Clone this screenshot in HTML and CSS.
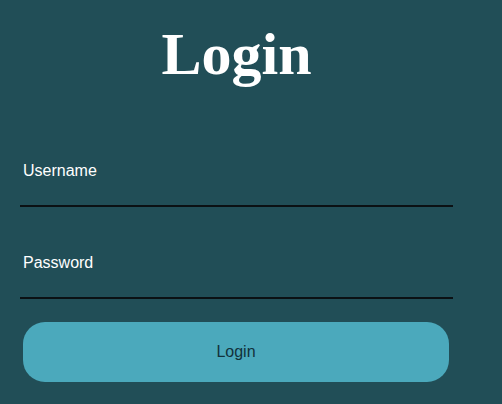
FILE: index.html
```html
<!DOCTYPE html>
<html>
<head>
<meta charset="utf-8">
<link rel="stylesheet" href="styles.css">
</head>
<body>
<form class="login">
  <h1 class="title">Login</h1>
  <div class="field"><span class="label">Username</span></div>
  <div class="field"><span class="label">Password</span></div>
  <button type="button" class="btn">Login</button>
</form>
</body>
</html>
```
FILE: styles.css
```css
html, body {
  margin: 0;
  padding: 0;
  background: #214e57;
  height: 100%;
}
body {
  font-family: "Liberation Sans", Arial, sans-serif;
}
.login {
  width: 433px;
  margin-left: 20px;
  display: flex;
  flex-direction: column;
}
.title {
  margin: 19px 0 0;
  font-family: "Liberation Serif", "Times New Roman", serif;
  font-weight: bold;
  font-size: 60px;
  line-height: 70px;
  height: 70px;
  color: #ffffff;
  text-align: center;
}
.field {
  padding: 47px 3px 25px;
  border-bottom: 2px solid #0b1114;
}
.field:first-of-type {
  margin-top: 26px;
}
.label {
  display: block;
  font-size: 16px;
  line-height: 18px;
  color: #ffffff;
}
.btn {
  margin: 23px 0 0 3px;
  width: 426px;
  height: 60px;
  border: none;
  border-radius: 22px;
  background: #4ba9bc;
  color: #12313b;
  font-family: "Liberation Sans", Arial, sans-serif;
  font-size: 16px;
  padding: 0;
}
```
